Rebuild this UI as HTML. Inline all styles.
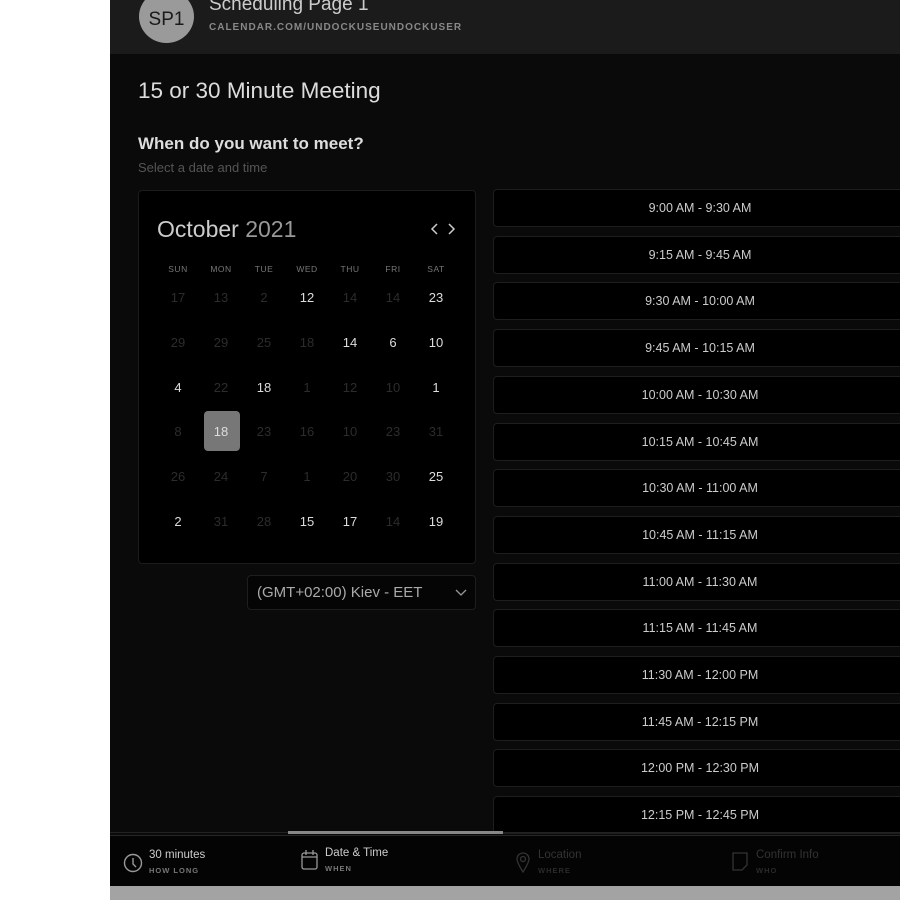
<!DOCTYPE html>
<html><head><style>
*{margin:0;padding:0;box-sizing:border-box}
body{width:900px;height:900px;background:#fff;position:relative;overflow:hidden;font-family:"Liberation Sans",sans-serif}
.main{position:absolute;left:110px;top:0;width:790px;height:900px;background:#0a0a0a}
.hdr{position:absolute;left:0;top:0;width:790px;height:54px;background:#1b1b1b}
.av{position:absolute;left:29px;top:-10px;width:55px;height:53px;border-radius:50%;background:#9a9a9a;color:#1a1a1a;font-size:19px;text-align:center;line-height:50px;padding-top:5px}
.t1{position:absolute;left:99px;top:-6px;color:#ccc;font-size:19px}
.t2{position:absolute;left:99px;top:22px;color:#888;font-size:10px;letter-spacing:1px;font-weight:bold}
.abs{position:absolute}
.cal{position:absolute;left:28px;top:190px;width:338px;height:374px;background:#000;border:1px solid #1c1c1c;border-radius:4px}
.d{position:absolute;width:36px;text-align:center;font-size:13px;color:#2c2c2c}
.d.on{color:#ddd}
.wd{position:absolute;width:36px;text-align:center;font-size:8.5px;color:#777;letter-spacing:.5px}
.slot{position:absolute;left:383px;width:420px;height:38px;background:#000;border:1px solid #1e1e1e;border-radius:4px;color:#ccc;font-size:12.5px;line-height:36px}
.slot span{position:absolute;left:0;width:412px;text-align:center}
.foot{position:absolute;left:0;top:835px;width:790px;height:51px;background:#040404;border-top:1px solid #262626}
.fl{position:absolute;font-size:11.5px}
.fs{position:absolute;font-size:7.5px;letter-spacing:1px;font-weight:bold}
</style></head><body>
<div class="main">
<div class="hdr"><div class="av">SP1</div><div class="t1">Scheduling Page 1</div><div class="t2">CALENDAR.COM/UNDOCKUSEUNDOCKUSER</div></div>
<div class="abs" style="left:28px;top:78px;color:#ddd;font-size:22.5px">15 or 30 Minute Meeting</div>
<div class="abs" style="left:28px;top:134px;color:#ddd;font-size:17px;font-weight:bold">When do you want to meet?</div>
<div class="abs" style="left:28px;top:160px;color:#555;font-size:13px">Select a date and time</div>
<div class="cal">
<div class="abs" style="left:18px;top:25px;color:#ccc;font-size:23px">October <span style="color:#999">2021</span></div>
<svg class="abs" style="left:290px;top:31px" width="30" height="14"><path d="M8 2l-5 5 5 5M20 2l5 5-5 5" stroke="#ccc" fill="none" stroke-width="1.5"/></svg>
<div class="wd" style="left:21px;top:73px">SUN</div><div class="wd" style="left:64px;top:73px">MON</div><div class="wd" style="left:107px;top:73px">TUE</div><div class="wd" style="left:150px;top:73px">WED</div><div class="wd" style="left:193px;top:73px">THU</div><div class="wd" style="left:236px;top:73px">FRI</div><div class="wd" style="left:279px;top:73px">SAT</div>
<div class="abs" style="left:65px;top:220px;width:36px;height:40px;background:#777;border-radius:4px"></div>
<div id="days"></div>
</div>
<div class="abs" style="left:137px;top:575px;width:229px;height:35px;border:1px solid #1e1e1e;border-radius:4px;background:#050505;color:#aaa;font-size:15px;line-height:33px;padding-left:9px">(GMT+02:00) Kiev - EET<svg style="position:absolute;right:8px;top:13px" width="12" height="8"><path d="M1 1l5 5 5-5" stroke="#999" fill="none" stroke-width="1.3"/></svg></div>
<div id="slots"></div>
<div class="abs" style="left:0;top:832px;width:790px;height:1px;background:#222"></div>
<div class="abs" style="left:178px;top:831px;width:215px;height:3px;background:#888"></div>
<div class="foot">
<svg class="abs" style="left:13px;top:17px" width="20" height="20"><circle cx="10" cy="10" r="8.5" stroke="#999" fill="none" stroke-width="1.4"/><path d="M10 5v6l3 3" stroke="#999" fill="none" stroke-width="1.4"/></svg>
<div class="fl" style="left:39px;top:13px;color:#ccc">30 minutes</div><div class="fs" style="left:39px;top:30px;color:#777">HOW LONG</div>
<svg class="abs" style="left:191px;top:13px" width="18" height="22"><rect x="1" y="4" width="15" height="16" rx="2" stroke="#999" fill="none" stroke-width="1.3"/><path d="M1 8h15M5 1v5M12 1v5" stroke="#999" stroke-width="1.3"/></svg>
<div class="fl" style="left:215px;top:11px;color:#ccc">Date &amp; Time</div><div class="fs" style="left:215px;top:28px;color:#777">WHEN</div>
<svg class="abs" style="left:405px;top:15px" width="16" height="22"><path d="M8 21C3 13 2 10 2 8a6 6 0 0112 0c0 2-1 5-6 13z" stroke="#333" fill="none" stroke-width="1.3"/><circle cx="8" cy="8" r="2.5" stroke="#333" fill="none" stroke-width="1.3"/></svg>
<div class="fl" style="left:428px;top:13px;color:#333">Location</div><div class="fs" style="left:428px;top:30px;color:#2a2a2a">WHERE</div>
<svg class="abs" style="left:622px;top:16px" width="16" height="20"><path d="M1 1h14v12l-5 5H1z" stroke="#333" fill="none" stroke-width="1.3"/></svg>
<div class="fl" style="left:646px;top:13px;color:#333">Confirm Info</div><div class="fs" style="left:646px;top:30px;color:#2a2a2a">WHO</div>
</div>
<div class="abs" style="left:0;top:886px;width:790px;height:14px;background:#a3a3a3"></div>
</div>
<script>
var rows=[["17","13","2","12*","14","14","23*"],["29","29","25","18","14*","6*","10*"],["4*","22","18*","1","12","10","1*"],["8","18*","23","16","10","23","31"],["26","24","7","1","20","30","25*"],["2*","31","28","15*","17*","14","19*"]];
var h="";rows.forEach(function(r,i){r.forEach(function(v,j){var on=v.indexOf("*")>=0;h+='<div class="d'+(on?' on':'')+'" style="left:'+(21+43*j)+'px;top:'+(99+44.8*i)+'px">'+v.replace("*","")+'</div>';});});
document.getElementById("days").innerHTML=h;
var s=["9:00 AM - 9:30 AM","9:15 AM - 9:45 AM","9:30 AM - 10:00 AM","9:45 AM - 10:15 AM","10:00 AM - 10:30 AM","10:15 AM - 10:45 AM","10:30 AM - 11:00 AM","10:45 AM - 11:15 AM","11:00 AM - 11:30 AM","11:15 AM - 11:45 AM","11:30 AM - 12:00 PM","11:45 AM - 12:15 PM","12:00 PM - 12:30 PM","12:15 PM - 12:45 PM"];
h="";s.forEach(function(t,i){h+='<div class="slot" style="top:'+(189+46.7*i)+'px"><span>'+t+'</span></div>';});
document.getElementById("slots").innerHTML=h;
</script>
</body></html>
